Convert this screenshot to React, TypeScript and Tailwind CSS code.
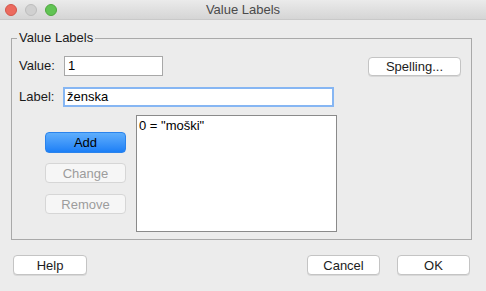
import React from 'react';

const font = { fontFamily: '"Liberation Sans", "DejaVu Sans", sans-serif' };

const Btn: React.FC<{ label: string; className?: string; disabled?: boolean }> = ({ label, className = '', disabled }) => (
  <div
    className={`flex items-center justify-center rounded-[4px] border text-[13px] leading-none ${
      disabled
        ? 'border-[#d6d6d6] bg-[#f6f6f6] text-[#9c9c9c]'
        : 'border-[#c4c4c4] bg-white text-[#1c1c1c] shadow-[0_1px_0_#d8d8d8]'
    } ${className}`}
  >
    {label}
  </div>
);

export default function App() {
  return (
    <div className="w-[486px] h-[291px] bg-[#ececec] flex flex-col overflow-hidden" style={font}>
      {/* title bar */}
      <div className="h-[20px] shrink-0 flex items-center border-b border-[#c9c9c9] bg-gradient-to-b from-[#ebebeb] to-[#d5d5d5] relative">
        <div className="flex gap-[8px] pl-[5px]">
          <span className="w-[12px] h-[12px] rounded-full bg-[#ec6a5e] border border-[#d2554a]" />
          <span className="w-[12px] h-[12px] rounded-full bg-[#d0d0d0] border border-[#bdbdbd]" />
          <span className="w-[12px] h-[12px] rounded-full bg-[#61c454] border border-[#4fa73f]" />
        </div>
        <div className="absolute inset-0 flex items-center justify-center text-[13px] text-[#4a4a4a]">Value Labels</div>
      </div>

      {/* group box */}
      <div className="relative mt-[18px] ml-[11px] w-[461px] h-[202px] border border-[#a9a9a9] pl-[7px] pr-[10px] pt-[17px] flex flex-col">
        <span className="absolute left-[5px] top-[-9px] bg-[#ececec] px-[2px] text-[13px] leading-[16px] text-[#1a1a1a]">
          Value Labels
        </span>

        <div className="flex items-center h-[20px]">
          <span className="w-[45px] text-[13px] text-[#1a1a1a]">Value:</span>
          <div className="w-[99px] h-[20px] bg-white border border-[#a8a8a8] flex items-center pl-[3px] text-[13px] text-black">1</div>
          <Btn label="Spelling..." className="ml-auto w-[93px] h-[19px]" />
        </div>

        <div className="flex items-center h-[20px] mt-[11px]">
          <span className="w-[44px] text-[13px] text-[#1a1a1a]">Label:</span>
          <div className="w-[271px] h-[20px] bg-white border-2 border-[#86b6f3] flex items-center pl-[2px] text-[13px] text-black">
            ženska
          </div>
        </div>

        <div className="flex mt-[8px] pl-[26px]">
          <div className="flex flex-col w-[81px] pt-[17px]">
            <div className="h-[21px] rounded-[4px] bg-gradient-to-b from-[#5eaefc] to-[#1b7ff6] border border-[#2a83ec] flex items-center justify-center text-[13px] text-black">
              Add
            </div>
            <Btn label="Change" disabled className="h-[20px] mt-[10px]" />
            <Btn label="Remove" disabled className="h-[20px] mt-[11px]" />
          </div>
          <div className="ml-[10px] w-[201px] h-[117px] bg-white border border-[#8a8a8a] px-[2px] pt-[2px] text-[13px] leading-[16px] text-black">
            0 = "moški"
          </div>
        </div>
      </div>

      {/* bottom buttons */}
      <div className="flex mt-[15px] pl-[13px]">
        <Btn label="Help" className="w-[74px] h-[20px]" />
        <Btn label="Cancel" className="ml-auto w-[73px] h-[20px]" />
        <Btn label="OK" className="ml-[17px] mr-[16px] w-[73px] h-[20px]" />
      </div>
    </div>
  );
}
